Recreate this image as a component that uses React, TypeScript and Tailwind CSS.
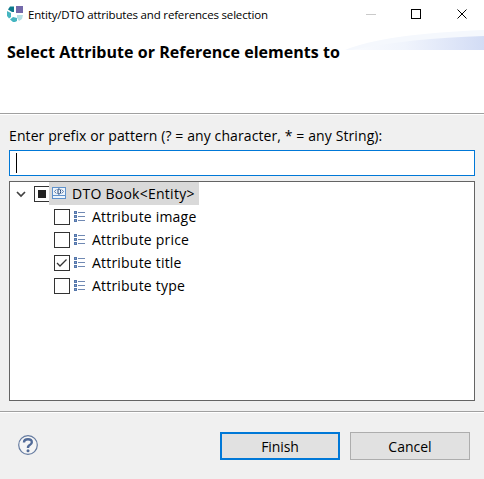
import React from 'react';

const rows = [
  { name: 'Attribute image', checked: false },
  { name: 'Attribute price', checked: false },
  { name: 'Attribute title', checked: true },
  { name: 'Attribute type', checked: false },
];

function AppIcon() {
  return (
    <svg className="-mt-[2px] ml-[7px] h-4 w-4 shrink-0" viewBox="0 0 16 16">
      <path d="M3 .5h4V6H5L1 3.500z" fill="#0d7a8c" />
      <path d="M9 0h7v7H9z" fill="#7369aa" />
      <path d="M0 5l4 2v4l-2 1.500L0 10z" fill="#45b5c0" />
      <path d="M3 13.500L6 11l4 1v3l-2 1H6z" fill="#45b5c0" />
      <path d="M10 9h6l-1 4-3 2-2-3z" fill="#b5dfe4" />
    </svg>
  );
}

function AttributeIcon() {
  return (
    <svg className="ml-[4px] h-3 w-3 shrink-0" viewBox="0 0 12 12" shapeRendering="crispEdges">
      {[0, 4, 8].map((y) => (
        <g key={y}>
          <rect x="0" y={y} width="3" height="3" fill="#5577ab" />
          <rect x="1" y={y + 1} width="1" height="1" fill="#7f9cc9" />
          <rect x="4" y={y + 1} width="7" height="1" fill="#7089b3" />
        </g>
      ))}
    </svg>
  );
}

function DtoIcon() {
  return (
    <svg className="-mt-px ml-[2px] h-3 w-[14px] shrink-0" viewBox="0 0 14 12">
      <rect x=".5" y=".5" width="13" height="11" fill="#eef5fc" stroke="#5f92cc" />
      <path d="M4.300 2.500L2.500 4.500l1.800 2M9.700 2.500l1.800 2-1.800 2" fill="none" stroke="#4b6c9c" strokeWidth=".9" />
      <path d="M6 2h1.200q1.500 0 1.500 2.500T7.200 7H6z" fill="none" stroke="#24487c" />
      <path d="M1 8.500h12" stroke="#5f92cc" />
    </svg>
  );
}

export default function App() {
  return (
    <div className="flex h-[479px] w-[484px] flex-col overflow-hidden bg-[#f0f0f0] font-['Open_Sans','Noto_Sans',sans-serif] text-black">
      <header className="flex h-[30px] shrink-0 items-center bg-white">
        <AppIcon />
        <h1 className="ml-[5px] w-[330px] whitespace-nowrap text-[11.500px] leading-4 tracking-[-0.175px]">Entity/DTO attributes and references selection</h1>
        <svg className="h-[30px] w-[126px] shrink-0" viewBox="358 0 126 30" fill="none">
          <path d="M366 14.500h10" stroke="#cacaca" />
          <rect x="411.500" y="9.500" width="9" height="9" stroke="#000" />
          <path d="M457.500 9.500l9 9M466.500 9.500l-9 9" stroke="#000" />
        </svg>
      </header>
      <section className="flex h-[83px] shrink-0 items-start bg-white">
        <h2 className="ml-[7px] mt-[10px] w-[338px] whitespace-nowrap text-[16px] font-bold leading-6 tracking-[0.03px]">Select Attribute or Reference elements to</h2>
        <svg className="h-5 w-[139px] shrink-0" viewBox="345 30 139 20">
          <defs>
            <linearGradient id="wave">
              <stop stopColor="#f9fbfe" />
              <stop offset=".4" stopColor="#f0f4fc" />
              <stop offset=".75" stopColor="#dfe6f8" />
              <stop offset="1" stopColor="#d2dcf5" />
            </linearGradient>
          </defs>
          <path d="M345 50Q383 34 484 30V50z" fill="#f5f8fd" />
          <path d="M352 50Q410 38 484 36V50z" fill="url(#wave)" />
        </svg>
      </section>
      <div className="h-[2px] shrink-0 border-t border-[#a0a0a0] bg-white" />
      <main className="flex h-[296px] shrink-0 flex-col px-[9px]">
        <label className="mt-[10px] h-[25px] whitespace-nowrap text-[14px] leading-[22px] tracking-[0.1px]">Enter prefix or pattern (? = any character, * = any String):</label>
        <div className="flex h-[26px] w-[466px] items-center border border-[#0078d7] bg-white pl-[6px]">
          <span className="h-5 w-px bg-black" />
        </div>
        <div className="mt-[5px] h-[220px] w-[466px] border border-[#646464] bg-white">
          <div className="flex h-[23px] items-center">
            <svg className="ml-[5px] h-3 w-3 shrink-0" viewBox="0 0 12 12"><path d="M2 4l4 4 4-4" fill="none" stroke="#404040" strokeWidth="1.700" /></svg>
            <span className="ml-[7px] flex h-4 w-4 shrink-0 items-center justify-center border border-[#333] bg-white"><span className="h-2 w-2 bg-[#222]" /></span>
            <div className="-ml-px flex h-[23px] w-[150px] items-center bg-[#d9d9d9] pl-px">
              <DtoIcon />
              <span className="ml-[6px] whitespace-nowrap text-[14px] tracking-[0.26px]">DTO Book&lt;Entity&gt;</span>
            </div>
          </div>
          {rows.map((r) => (
            <div key={r.name} className="flex h-[23px] items-center pl-[44px]">
              <span className="flex h-4 w-4 shrink-0 items-center justify-center border border-[#333] bg-white">
                {r.checked && <svg className="h-[14px] w-[14px]" viewBox="0 0 14 14"><path d="M2 7l3 3 6.500-6.500" fill="none" stroke="#333" strokeWidth="1.300" /></svg>}
              </span>
              <AttributeIcon />
              <span className="ml-[6px] whitespace-nowrap text-[14px] tracking-[0.2px]">{r.name}</span>
            </div>
          ))}
        </div>
      </main>
      <footer className="flex h-[68px] shrink-0 items-start border-t border-[#a0a0a0]">
        <div className="flex h-[67px] w-full items-start border-t border-white">
          <svg className="ml-[18px] mt-[22px] h-5 w-5 shrink-0" viewBox="0 0 20 20" fill="none">
            <circle cx="10" cy="10" r="9.300" fill="#f5f5f5" stroke="#657ba0" strokeWidth="1.200" />
            <path d="M6 7.500Q6 4.300 10 4.300T13.800 7.300Q13.800 9 11.800 10T10 13" stroke="#526b98" strokeWidth="2.400" />
            <circle cx="10" cy="15.700" r="1.500" fill="#526b98" />
          </svg>
          <button className="ml-[182px] mt-[19px] h-7 w-[120px] border-2 border-[#0078d7] bg-[#e1e1e1] pt-px text-[14px] leading-6 tracking-[-0.1px]">Finish</button>
          <button className="ml-[10px] mt-[19px] h-7 w-[120px] border border-[#adadad] bg-[#e1e1e1] pt-px text-[14px] leading-[26px]">Cancel</button>
        </div>
      </footer>
    </div>
  );
}
